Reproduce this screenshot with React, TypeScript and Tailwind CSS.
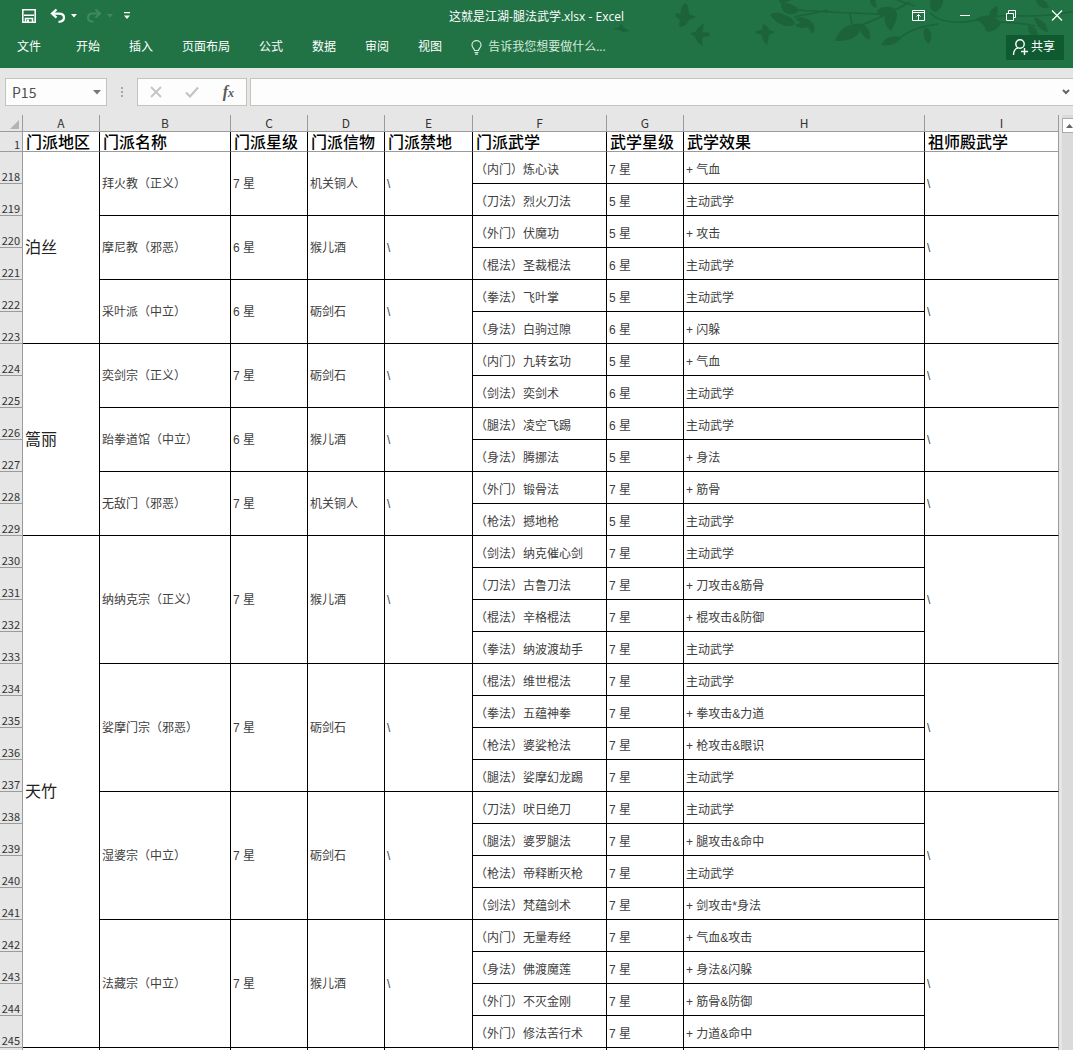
import React from "react";
import type { ReactNode } from "react";

interface Skill {
  name: string;
  star: number;
  effect: string;
}

interface Sect {
  name: string;
  star: number;
  token: string;
  skills: Skill[];
}

interface Region {
  name: string;
  sects: Sect[];
}

const FIRST_ROW = 218;

const skill = (name: string, star: number, effect = "主动武学"): Skill => ({ name, star, effect });

const regions: Region[] = [
  {
    name: "泊丝",
    sects: [
      {
        name: "拜火教（正义）",
        star: 7,
        token: "机关铜人",
        skills: [skill("（内门）炼心诀", 7, "+ 气血"), skill("（刀法）烈火刀法", 5)],
      },
      {
        name: "摩尼教（邪恶）",
        star: 6,
        token: "猴儿酒",
        skills: [skill("（外门）伏魔功", 5, "+ 攻击"), skill("（棍法）圣裁棍法", 6)],
      },
      {
        name: "采叶派（中立）",
        star: 6,
        token: "砺剑石",
        skills: [skill("（拳法）飞叶掌", 5), skill("（身法）白驹过隙", 6, "+ 闪躲")],
      },
    ],
  },
  {
    name: "篙丽",
    sects: [
      {
        name: "奕剑宗（正义）",
        star: 7,
        token: "砺剑石",
        skills: [skill("（内门）九转玄功", 5, "+ 气血"), skill("（剑法）奕剑术", 6)],
      },
      {
        name: "跆拳道馆（中立）",
        star: 6,
        token: "猴儿酒",
        skills: [skill("（腿法）凌空飞踢", 6), skill("（身法）腾挪法", 5, "+ 身法")],
      },
      {
        name: "无敌门（邪恶）",
        star: 7,
        token: "机关铜人",
        skills: [skill("（外门）锻骨法", 7, "+ 筋骨"), skill("（枪法）撼地枪", 5)],
      },
    ],
  },
  {
    name: "天竹",
    sects: [
      {
        name: "纳纳克宗（正义）",
        star: 7,
        token: "猴儿酒",
        skills: [
          skill("（剑法）纳克催心剑", 7),
          skill("（刀法）古鲁刀法", 7, "+ 刀攻击&筋骨"),
          skill("（棍法）辛格棍法", 7, "+ 棍攻击&防御"),
          skill("（拳法）纳波渡劫手", 7),
        ],
      },
      {
        name: "娑摩门宗（邪恶）",
        star: 7,
        token: "砺剑石",
        skills: [
          skill("（棍法）维世棍法", 7),
          skill("（拳法）五蕴神拳", 7, "+ 拳攻击&力道"),
          skill("（枪法）婆娑枪法", 7, "+ 枪攻击&眼识"),
          skill("（腿法）娑摩幻龙踢", 7),
        ],
      },
      {
        name: "湿婆宗（中立）",
        star: 7,
        token: "砺剑石",
        skills: [
          skill("（刀法）吠日绝刀", 7),
          skill("（腿法）婆罗腿法", 7, "+ 腿攻击&命中"),
          skill("（枪法）帝释断灭枪", 7),
          skill("（剑法）梵蕴剑术", 7, "+ 剑攻击*身法"),
        ],
      },
      {
        name: "法藏宗（中立）",
        star: 7,
        token: "猴儿酒",
        skills: [
          skill("（内门）无量寿经", 7, "+ 气血&攻击"),
          skill("（身法）佛渡魔莲", 7, "+ 身法&闪躲"),
          skill("（外门）不灭金刚", 7, "+ 筋骨&防御"),
          skill("（外门）修法苦行术", 7, "+ 力道&命中"),
        ],
      },
    ],
  },
];

const columns = [
  { letter: "A", title: "门派地区", className: "w-[77px]" },
  { letter: "B", title: "门派名称", className: "w-[131px]" },
  { letter: "C", title: "门派星级", className: "w-[77px]" },
  { letter: "D", title: "门派信物", className: "w-[77px]" },
  { letter: "E", title: "门派禁地", className: "w-[88px]" },
  { letter: "F", title: "门派武学", className: "w-[134px]" },
  { letter: "G", title: "武学星级", className: "w-[77px]" },
  { letter: "H", title: "武学效果", className: "w-[241px]" },
  { letter: "I", title: "祖师殿武学", className: "pl-5" },
];

const menuTabs = ["开始", "插入", "页面布局", "公式", "数据", "审阅", "视图"];

/* Branches, leaves and birds behind the window buttons */
function HeaderArt() {
  return (
    <svg
      className="pointer-events-none absolute top-0 right-0 h-[50px] w-[468px]"
      viewBox="605 0 468 50"
      fill="#1c6339"
      aria-hidden="true"
    >
      {/* birds */}
      <path d="M685 3c3 1 4 7 4 11 2 1 4 1 7 3-2 1-5 2-7 3-2 4-5 7-9 7-1-2-1-4 0-7l-5-4 1-3 5 1c-1-4 1-9 4-11z" />
      <path d="M704 24c-1 3 0 5-2 8l8 1-1 3-6 1c-1 3-1 6 0 9-4-2-7-5-8-9l-5-4 6-1c1-4 4-7 8-8z" />
      <path d="M763 24c3 1 5 3 6 6l6 2-6 3c-1 4-1 7-2 10-3-2-5-6-5-10l-7-2 1-2 6-1z" />
      <path d="M622 23c0 2 1 4 2 5l6 3-7 1-4-2-6-1 6-2z" />
      {/* twigs */}
      <g fill="none" stroke="#1c6339" strokeWidth="1.6">
        <path d="M780 2c7 7 20 9 36 9 24 2 50 2 72 4" />
        <path d="M794 17c12-3 24-4 34-7" />
        <path d="M862 25c15-6 30-13 48-23" strokeWidth="2" />
        <path d="M850 14l2 10" />
        <path d="M900 38c12-10 26-12 38-14" />
        <path d="M930 13c8 8 20 10 34 9 24-3 30-8 60-6 20 0 36-1 50-5" />
        <path d="M975 20c20 4 36 0 60 6" />
        <path d="M897 0l18 6" />
      </g>
      {/* leaves */}
      <path d="M770 15c5-4 11-3 16 1 5 1 8 4 9 8-5 3-10 3-14 0-4-1-8-5-11-9z" />
      <path d="M782 2c-2 5 0 10 6 12 6 1 9-1 11-4-4-5-10-7-17-8z" />
      <path d="M778 0c3 3 10 3 14-1z" />
      <path d="M795 26c5-5 11-6 18-3 2 3 2 7 0 11-2-2-4-4-5-7-5 2-9 1-13-1z" />
      <path d="M795 19c5-3 10-2 16 2-5 3-11 2-16-2z" />
      <path d="M835 41c5-14 15-18 27-17-1 12-12 18-27 17z" />
      <path d="M859 24c8 1 12 6 11 16-6-2-10-7-11-16z" />
      <path d="M877 15c-1-7 8-10 17-7 6 6 2 15-3 23-5-4-7-9-6-15-3-1-6-1-8-1z" />
      <path d="M870 0c0 4 3 7 6 8 1-3 0-6-1-8z" />
      <path d="M881 45c3-7 10-10 20-8-3 7-10 9-20 8z" />
      <path d="M925 27c7 3 8 9 4 17-5-4-7-10-4-17z" />
      <path d="M931 0c-2 5-1 9 3 12 5-1 9-5 9-12z" />
      <path d="M975 19c8-4 16-5 20-1l6 4c-2 7-9 11-15 9-1-5-4-9-11-12z" />
      <path d="M989 19c-1-7 3-11 8-13 2 6 0 11-5 15z" />
      <path d="M1034 17c8 3 13 7 14 15-6-1-12-5-14-15z" />
      <path d="M1028 26c8 1 11 5 9 13-6-2-9-7-9-13z" />
      <path d="M1036 0c1 6 6 9 13 8-1-4-3-7-6-8z" />
    </svg>
  );
}

function WindowButton({ label, children }: { label: string; children: ReactNode }) {
  return (
    <button type="button" aria-label={label} className="flex h-[30px] w-8 items-center justify-center">
      <svg className="size-4" viewBox="0 0 16 16" fill="none" stroke="white" aria-hidden="true">
        {children}
      </svg>
    </button>
  );
}

function TitleBar() {
  return (
    <div className="grid h-8 grid-cols-[1fr_auto_1fr] items-center">
      <div className="flex items-center pl-[21px]">
        <button type="button" aria-label="保存">
          <svg className="size-4" viewBox="0 0 16 16" fill="none" stroke="white" strokeWidth="1.6" aria-hidden="true">
            <path d="M1.8 1.8h12.4v12.4H1.8zM3 7.2h10M4.5 14v-3.5h7v3.5" />
            <path d="M7 11.5v2.5" strokeWidth="2" />
          </svg>
        </button>
        <button type="button" aria-label="撤消" className="ml-3 flex items-center gap-1">
          <svg className="h-4 w-[18px]" viewBox="0 0 18 16" fill="none" stroke="white" strokeWidth="2.2" aria-hidden="true">
            <path d="M7.5 1.5L3 5.6l4.5 4" />
            <path d="M3 5.6h7c3 0 5 1.6 5 4s-2 4.2-5.5 4.2" />
          </svg>
          <svg className="h-1 w-[6px]" viewBox="0 0 6 4" fill="white" aria-hidden="true">
            <path d="M0 0h6L3 3.5z" />
          </svg>
        </button>
        <button type="button" aria-label="恢复" className="ml-2 flex items-center gap-1 text-[#43885f]">
          <svg className="h-4 w-[18px]" viewBox="0 0 18 16" fill="none" stroke="currentColor" strokeWidth="2" aria-hidden="true">
            <path d="M10.5 1.5L15 5.6l-4.5 4" />
            <path d="M15 5.6H8c-3 0-5 1.6-5 4s2 4.2 5.5 4.2" />
          </svg>
          <svg className="h-1 w-[6px]" viewBox="0 0 6 4" fill="currentColor" aria-hidden="true">
            <path d="M0 0h6L3 3.5z" />
          </svg>
        </button>
        <button type="button" aria-label="自定义快速访问工具栏" className="ml-[10px]">
          <svg className="h-2 w-2" viewBox="0 0 8 8" fill="white" aria-hidden="true">
            <path d="M1 0h6v1.2H1zM1 3.5h6L4 7z" />
          </svg>
        </button>
      </div>
      <h1 className="pt-[2px] text-xs whitespace-nowrap">这就是江湖-腿法武学.xlsx - Excel</h1>
      <div className="flex justify-end gap-[14px]">
        <WindowButton label="功能区显示选项">
          <path d="M1.5 2.5h12v10h-12zM1.5 4.5h12M7.5 12V6.5M5.5 8.5l2-2 2 2" />
        </WindowButton>
        <WindowButton label="最小化">
          <path d="M3 7.5h10" />
        </WindowButton>
        <WindowButton label="向下还原">
          <path d="M3.5 5.5h7v7h-7zM5.5 5.5v-3h7v7h-2" />
        </WindowButton>
        <WindowButton label="关闭">
          <path d="M3 2.5l10 10M13 2.5l-10 10" strokeWidth="1.2" />
        </WindowButton>
      </div>
    </div>
  );
}

function MenuBar() {
  return (
    <nav className="flex h-[30px] items-center pr-[9px] pl-[17px] text-xs">
      <button type="button">文件</button>
      <div className="ml-[35px] flex gap-[29px]">
        {menuTabs.map((tab) => (
          <button key={tab} type="button">
            {tab}
          </button>
        ))}
      </div>
      <button type="button" className="ml-[29px] flex items-center gap-[6px] text-[#d3e8db]">
        <svg className="h-[15px] w-[11px]" viewBox="0 0 11 15" fill="none" stroke="currentColor" strokeWidth="1.2" aria-hidden="true">
          <path d="M3.5 10.5c0-2-2.5-2.5-2.5-5.5a4.5 4.3 0 0 1 9 0c0 3-2.5 3.5-2.5 5.5zM3.5 12.5h4M4 14.2h3" />
        </svg>
        告诉我您想要做什么...
      </button>
      <button type="button" className="ml-auto flex h-[25px] w-[58px] items-center gap-[3px] bg-[#0f5a30] pl-[6px]">
        <svg className="size-4" viewBox="0 0 16 16" fill="none" stroke="white" strokeWidth="1.4" aria-hidden="true">
          <circle cx="8" cy="5" r="4.2" />
          <path d="M1.5 16c0-4 2-6.5 4.5-7.2M12.5 9v7M9 12.5h7" />
        </svg>
        共享
      </button>
    </nav>
  );
}

function FormulaBar() {
  return (
    <div className="flex h-[47px] items-start pt-[10px] pl-[5px]">
      <div className="flex h-7 w-[102px] items-center border border-[#c3c5bd] bg-[#fdfdfd] pr-[5px] pl-[6px]">
        <input
          aria-label="名称框"
          defaultValue="P15"
          className="w-0 flex-1 bg-transparent font-['Noto_Sans_CJK_SC',sans-serif] text-sm text-[#505050] outline-none"
        />
        <svg className="h-[5px] w-2" viewBox="0 0 8 5" fill="#777" aria-hidden="true">
          <path d="M0 0h8L4 4.5z" />
        </svg>
      </div>
      <svg className="mx-[14px] h-7 w-[2px]" viewBox="0 0 2 28" fill="#a6a6a6" aria-hidden="true">
        <path d="M0 9h2v2H0zM0 13h2v2H0zM0 17h2v2H0z" />
      </svg>
      <div className="flex h-7 w-[110px] items-center justify-between border border-[#c3c5bd] bg-[#fdfdfd] px-3">
        <button type="button" aria-label="取消">
          <svg className="h-3 w-3" viewBox="0 0 12 12" fill="none" stroke="#c4c4c4" strokeWidth="1.8" aria-hidden="true">
            <path d="M1 1l10 10M11 1L1 11" />
          </svg>
        </button>
        <button type="button" aria-label="输入">
          <svg className="h-3 w-[14px]" viewBox="0 0 14 12" fill="none" stroke="#c4c4c4" strokeWidth="2.2" aria-hidden="true">
            <path d="M1 6.5l4 4L13 1.5" />
          </svg>
        </button>
        <button
          type="button"
          aria-label="插入函数"
          className="font-['Liberation_Serif',serif] text-base leading-4 font-bold text-[#5a5a5a] italic"
        >
          f<span className="text-xs">x</span>
        </button>
      </div>
      <div className="ml-[3px] flex h-7 flex-1 items-center border border-r-0 border-[#c3c5bd] bg-[#fdfdfd] pr-[3px]">
        <input aria-label="编辑栏" className="h-full w-0 flex-1 bg-transparent px-2 text-sm outline-none" />
        <button type="button" aria-label="展开编辑栏">
          <svg className="h-[6px] w-2" viewBox="0 0 8 6" fill="none" stroke="#666" strokeWidth="2" aria-hidden="true">
            <path d="M1 1l3 3 3-3" />
          </svg>
        </button>
      </div>
    </div>
  );
}

function RowNumber({ value }: { value: number | "" }) {
  return (
    <th
      scope="row"
      className="border-r border-b border-[#9b9b9b] bg-[#e6e6e6] pr-[2px] text-right align-bottom font-['Noto_Sans_CJK_SC',sans-serif] text-[11px] leading-[13px] font-normal text-[#333]"
    >
      {value}
    </th>
  );
}

function Cell({ span = 1, last = false, children }: { span?: number; last?: boolean; children?: ReactNode }) {
  return (
    <td
      rowSpan={span}
      className={
        last
          ? "border-r border-b border-r-[#9b9b9b] border-b-black pl-[2px]"
          : "border-r border-b border-black pl-[2px]"
      }
    >
      {children}
    </td>
  );
}

/* Skill cells sit a little below the middle of their row */
function SkillCell({ children }: { children: ReactNode }) {
  return <td className="border-r border-b border-black pt-1 pl-[2px]">{children}</td>;
}

function SheetRows() {
  let rowNumber = FIRST_ROW;

  return regions.flatMap((region) => {
    const regionSpan = region.sects.reduce((sum, sect) => sum + sect.skills.length, 0);

    return region.sects.flatMap((sect, sectIndex) =>
      sect.skills.map((item, skillIndex) => {
        const number = rowNumber++;
        const span = sect.skills.length;
        const firstOfSect = skillIndex === 0;

        return (
          <tr key={number} className="h-8">
            <RowNumber value={number} />
            {firstOfSect && sectIndex === 0 && (
              <td rowSpan={regionSpan} className="border-r border-b border-black pl-[2px] text-base text-[#222]">
                {region.name}
              </td>
            )}
            {firstOfSect && (
              <>
                <Cell span={span}>{sect.name}</Cell>
                <Cell span={span}>{sect.star} 星</Cell>
                <Cell span={span}>{sect.token}</Cell>
                <Cell span={span}>\</Cell>
              </>
            )}
            <SkillCell>{item.name}</SkillCell>
            <SkillCell>{item.star} 星</SkillCell>
            <SkillCell>{item.effect}</SkillCell>
            {firstOfSect && (
              <Cell span={span} last>
                \
              </Cell>
            )}
          </tr>
        );
      })
    );
  });
}

function Sheet() {
  return (
    <table className="w-0 flex-1 table-fixed border-separate border-spacing-0 self-start bg-white font-['Liberation_Sans','Noto_Sans_CJK_SC',sans-serif] text-xs leading-4 text-[#404040]">
      <thead>
        <tr className="h-[17px] bg-[#e6e6e6] font-['Noto_Sans_CJK_SC',sans-serif] text-xs leading-4 text-[#333]">
          <td className="w-[23px] border-r border-b border-[#9b9b9b] p-0">
            <svg className="mt-[3px] ml-auto size-3" viewBox="0 0 12 12" fill="#b4b4b4" aria-hidden="true">
              <path d="M9 1v9H0z" />
            </svg>
          </td>
          {columns.map((column) => (
            <th
              key={column.letter}
              scope="col"
              className={`border-r border-b border-[#9b9b9b] py-0 text-center font-normal ${column.className}`}
            >
              {column.letter}
            </th>
          ))}
        </tr>
      </thead>
      <tbody>
        <tr className="h-5">
          <RowNumber value={1} />
          {columns.map((column) => (
            <td
              key={column.letter}
              className="border-r border-b border-r-black border-b-[#9b9b9b] p-0 pl-[3px] font-['Noto_Sans_CJK_SC',sans-serif] text-base leading-[19px] font-medium whitespace-nowrap text-black last:border-r-[#9b9b9b]"
            >
              {column.title}
            </td>
          ))}
        </tr>
        <SheetRows />
        <tr className="h-8">
          <RowNumber value="" />
          {columns.map((column, i) => (
            <Cell key={column.letter} last={i === columns.length - 1} />
          ))}
        </tr>
      </tbody>
    </table>
  );
}

export default function App() {
  return (
    <div className="flex h-screen flex-col overflow-hidden bg-[#e6e6e6] font-['Open_Sans','Noto_Sans_CJK_SC',sans-serif]">
      <header className="relative h-[68px] shrink-0 bg-[#217346] text-white">
        <HeaderArt />
        <div className="relative">
          <TitleBar />
          <MenuBar />
        </div>
      </header>
      <FormulaBar />
      <main className="flex min-h-0 flex-1 overflow-hidden">
        <Sheet />
        <div className="ml-[3px] flex w-[11px] flex-col overflow-hidden bg-[#dadada]">
          <button
            type="button"
            aria-label="向上滚动"
            className="mt-[3px] flex h-[15px] w-[15px] items-center justify-center border border-[#ababab] bg-white"
          >
            <svg className="h-1 w-[7px]" viewBox="0 0 7 4" fill="#666" aria-hidden="true">
              <path d="M3.5 0L7 4H0z" />
            </svg>
          </button>
        </div>
      </main>
    </div>
  );
}
